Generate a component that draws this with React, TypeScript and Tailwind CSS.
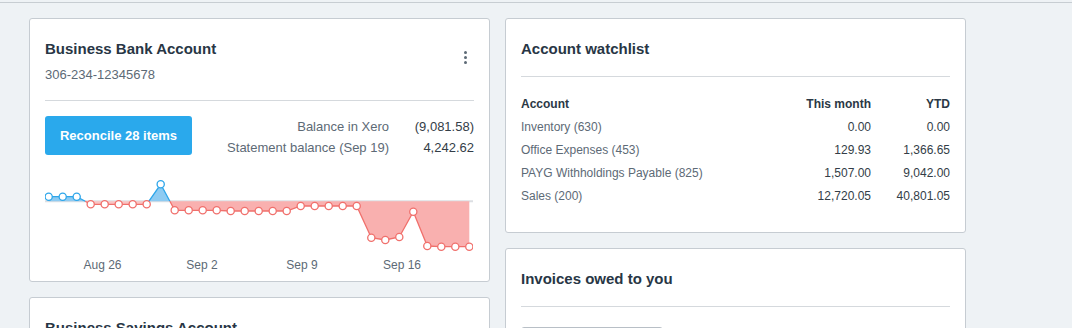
import React from 'react'

const font = { fontFamily: '"Liberation Sans", Arial, sans-serif' }

// chart points in page coordinates
const pts: [number, number][] = [
  [48.7, 196.7], [62.7, 196.7], [76.7, 196.7],
  [90.7, 204.3], [104.7, 204.3], [118.7, 204.3], [132.7, 204.3], [146.7, 204.3],
  [160.7, 184.3],
  [174.7, 210.3], [188.7, 210.3], [202.7, 210.3], [216.7, 210.3], [230.7, 211], [244.7, 211],
  [258.7, 211], [272.7, 211], [286.7, 211], [300.7, 206], [314.7, 206], [328.7, 206],
  [342.7, 206], [356.7, 206], [371.3, 237.7], [385.3, 240], [399.3, 237], [413.3, 211.7],
  [427.3, 246], [441.3, 246.7], [455.3, 246.7], [469.3, 246.7],
]
const Z = 201.3
const p = (a: [number, number][]) => a.map(([x, y]) => `${x},${y}`).join(' ')

const blue1: [number, number][] = [[48.7, Z], ...pts.slice(0, 3), [85.2, Z]]
const red1: [number, number][] = [[85.2, Z], ...pts.slice(3, 8), [148.8, Z]]
const blue2: [number, number][] = [[148.8, Z], pts[8], [169.9, Z]]
const red2: [number, number][] = [[169.9, Z], ...pts.slice(9), [469.3, Z]]

const BLUE = '#2ea6ea'
const RED = '#f0706c'

function Chart() {
  return (
    <svg viewBox="45 178 428 95" width={428} height={95} className="block">
      <line x1={45} y1={Z} x2={473} y2={Z} stroke="#dcdfe3" strokeWidth={2} />
      <polygon points={p(blue1)} fill="#8ecbf2" />
      <polygon points={p(blue2)} fill="#8ecbf2" />
      <polygon points={p(red1)} fill="#fac3c2" />
      <polygon points={p(red2)} fill="#f9b0af" />
      <polyline points={p(blue1.slice(1))} fill="none" stroke={BLUE} strokeWidth={1.3} />
      <polyline points={p(blue2)} fill="none" stroke={BLUE} strokeWidth={1.3} />
      <polyline points={p(red1)} fill="none" stroke={RED} strokeWidth={1.3} />
      <polyline points={p(red2.slice(0, -1))} fill="none" stroke={RED} strokeWidth={1.3} />
      {pts.map(([x, y], i) => (
        <circle key={i} cx={x} cy={y} r={3.6} fill="#fff"
          stroke={i < 3 || i === 8 ? BLUE : RED} strokeWidth={1.3} />
      ))}
      {[['Aug 26', 102.5], ['Sep 2', 202], ['Sep 9', 302], ['Sep 16', 402]].map(([t, x]) => (
        <text key={t as string} x={x as number} y={268.5} textAnchor="middle" fontSize={12}
          fill="#5d6a76" fontFamily='"Liberation Sans", Arial, sans-serif'>{t}</text>
      ))}
    </svg>
  )
}

function BankCard() {
  return (
    <div className="h-[264px] bg-white border border-[#c6ccd2] rounded-[3px] px-[15px] pt-[20px]">
      <div className="flex justify-between">
        <div>
          <div className="text-[15px] leading-[20px] font-bold text-[#283645]">Business Bank Account</div>
          <div className="mt-[7px] text-[13px] leading-[18px] text-[#5d6a76]">306-234-12345678</div>
        </div>
        <div className="flex flex-col gap-[2px] pt-[12px] pr-[7px]">
          <span className="w-[3px] h-[3px] rounded-full bg-[#5d6a76]" />
          <span className="w-[3px] h-[3px] rounded-full bg-[#5d6a76]" />
          <span className="w-[3px] h-[3px] rounded-full bg-[#5d6a76]" />
        </div>
      </div>
      <div className="mt-[16px] border-t border-[#d5d9dd]" />
      <div className="mt-[15px] flex justify-between">
        <button className="w-[147px] h-[39px] rounded-[3px] bg-[#2aa9ec] text-white text-[13px] font-bold">
          Reconcile 28 items
        </button>
        <div className="grid grid-cols-[auto_85px] text-[13px] leading-[21px] -mt-[0.5px]">
          <span className="text-right text-[#5d6a76]">Balance in Xero</span>
          <span className="text-right text-[#333d47]">(9,081.58)</span>
          <span className="text-right text-[#5d6a76]">Statement balance (Sep 19)</span>
          <span className="text-right text-[#333d47]">4,242.62</span>
        </div>
      </div>
      <div className="mt-[20px]">
        <Chart />
      </div>
    </div>
  )
}

const rows = [
  ['Inventory (630)', '0.00', '0.00'],
  ['Office Expenses (453)', '129.93', '1,366.65'],
  ['PAYG Withholdings Payable (825)', '1,507.00', '9,042.00'],
  ['Sales (200)', '12,720.05', '40,801.05'],
]

function WatchCard() {
  return (
    <div className="h-[215px] bg-white border border-[#c6ccd2] rounded-[3px] px-[15px] pt-[20px]">
      <div className="text-[15px] leading-[20px] font-bold text-[#283645]">Account watchlist</div>
      <div className="mt-[17px] border-t border-[#d5d9dd]" />
      <div className="mt-[16px] grid grid-cols-[1fr_110px_79px] text-[12px] leading-[23px]">
        <span className="font-bold text-[#2b3845]">Account</span>
        <span className="font-bold text-right text-[#2b3845]">This month</span>
        <span className="font-bold text-right text-[#2b3845]">YTD</span>
        {rows.map(r => (
          <React.Fragment key={r[0]}>
            <span className="text-[#5d6a76]">{r[0]}</span>
            <span className="text-right text-[#333d47]">{r[1]}</span>
            <span className="text-right text-[#333d47]">{r[2]}</span>
          </React.Fragment>
        ))}
      </div>
    </div>
  )
}

export default function App() {
  return (
    <div className="h-[328px] overflow-hidden bg-[#eef2f5]" style={font}>
      <div className="h-[3px] border-b border-[#c7cdd2]" />
      <div className="pt-[15px] pl-[29px] flex gap-[15px] items-start">
        <div className="w-[461px] flex flex-col gap-[15px]">
          <BankCard />
          <div className="h-[80px] bg-white border border-[#c6ccd2] rounded-[3px] px-[15px] pt-[20px]">
            <div className="text-[15px] leading-[20px] font-bold text-[#283645]">Business Savings Account</div>
          </div>
        </div>
        <div className="w-[461px] flex flex-col gap-[15px]">
          <WatchCard />
          <div className="h-[120px] bg-white border border-[#c6ccd2] rounded-[3px] px-[15px] pt-[20px]">
            <div className="text-[15px] leading-[20px] font-bold text-[#283645]">Invoices owed to you</div>
            <div className="mt-[17px] border-t border-[#d5d9dd]" />
            <div className="mt-[20px] w-[142px] h-[36px] border border-[#b8bfc6] rounded-[3px]" />
          </div>
        </div>
      </div>
    </div>
  )
}
